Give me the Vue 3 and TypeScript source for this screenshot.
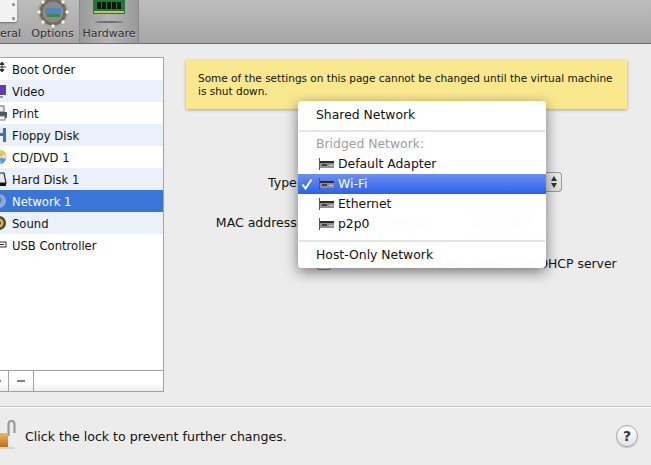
<template>
  <div class="window">
    <header class="toolbar">
      <div class="tool tool-general">
        <div class="general-icon">
          <span class="screw screw-a"></span>
          <span class="screw screw-b"></span>
        </div>
        <span class="tool-label">General</span>
      </div>
      <div class="tool tool-options">
        <svg class="tool-icon" width="34" height="30" viewBox="0 0 34 30">
          <circle cx="17" cy="12" r="14.5" fill="#6f6b62" stroke="#a9a59a" stroke-width="2" />
          <circle cx="17" cy="12" r="10.5" fill="#8d8a83" />
          <rect x="9" y="8" width="16" height="6" fill="#4f86c4" />
          <rect x="11" y="14" width="13" height="3" fill="#3f8a3c" />
          <circle v-for="d in optionDots" :key="d.x + '-' + d.y" :cx="d.x" :cy="d.y" r="1.7" fill="#f7f3dc" />
        </svg>
        <span class="tool-label">Options</span>
      </div>
      <div class="tool tool-hardware">
        <svg class="tool-icon" width="32" height="23" viewBox="0 0 32 23">
          <rect x="0" y="0" width="32" height="14" fill="#1f7a3a" />
          <rect v-for="x in ramChips" :key="x" :x="x" y="2" width="4" height="7" fill="#10130f" />
          <rect x="1" y="11" width="30" height="2" fill="#c9c45a" />
          <ellipse cx="16" cy="22" rx="14" ry="1" fill="#6e6e6e" />
        </svg>
        <span class="tool-label">Hardware</span>
      </div>
    </header>

    <main class="main">
      <aside class="sidebar">
        <ul class="device-list">
          <li
            v-for="(item, i) in devices"
            :key="item.name"
            class="device"
            :class="{ odd: i % 2 === 1, selected: item.name === 'Network 1' }"
          >
            <svg class="device-icon" width="16" height="16" viewBox="0 0 16 16">
              <template v-if="item.icon === 'boot'">
                <path d="M11 1v10M8 6h7M11 1l-2 2.5h4zM11 11l-2-2.5h4z" stroke="#333" fill="#333" />
              </template>
              <template v-else-if="item.icon === 'video'">
                <rect x="2" y="2" width="13" height="10" fill="#555" />
                <rect x="4" y="3.5" width="9" height="7" fill="#6a2ee0" />
                <rect x="6" y="13" width="6" height="2" fill="#999" />
              </template>
              <template v-else-if="item.icon === 'print'">
                <rect x="7" y="1" width="6" height="6" fill="#eee" stroke="#666" />
                <rect x="3" y="7" width="13" height="6" fill="#4b5563" />
                <rect x="6" y="11" width="8" height="4" fill="#f4f4f4" stroke="#777" />
              </template>
              <template v-else-if="item.icon === 'floppy'">
                <rect x="1" y="1" width="14" height="14" fill="#3d6fb8" />
                <rect x="4" y="1" width="8" height="5" fill="#dbe6f4" />
                <rect x="4" y="9" width="8" height="6" fill="#f2f2f2" />
              </template>
              <template v-else-if="item.icon === 'cd'">
                <circle cx="8" cy="8" r="7" fill="#e4e4ea" stroke="#999" stroke-width="0.5" />
                <path d="M8 8L15 5A7 7 0 0 0 10 1z" fill="#e9c53a" />
                <path d="M8 8L10 15A7 7 0 0 0 15 10z" fill="#5aa0e0" />
                <circle cx="8" cy="8" r="2" fill="#fff" stroke="#888" stroke-width="0.5" />
              </template>
              <template v-else-if="item.icon === 'disk'">
                <path d="M5 2h8l2 10H3z" fill="#e8e8e8" stroke="#222" stroke-width="1.2" />
                <rect x="2" y="12" width="13" height="3" fill="#111" />
              </template>
              <template v-else-if="item.icon === 'net'">
                <circle cx="8" cy="8" r="7" fill="#8fa8d4" />
                <path d="M3 6q3-4 6-2t1 5-5 3z" fill="#5c7fba" />
                <circle cx="6" cy="5" r="2" fill="#c9d6ee" />
              </template>
              <template v-else-if="item.icon === 'sound'">
                <circle cx="8" cy="8" r="7" fill="#4a4636" />
                <circle cx="8" cy="8" r="4.6" fill="#d6b945" />
                <circle cx="8" cy="8" r="2" fill="#4a4636" />
              </template>
              <template v-else>
                <rect x="3" y="5" width="12" height="5" fill="#f3f3f3" stroke="#333" />
                <rect x="5" y="7" width="8" height="1" fill="#333" />
              </template>
            </svg>
            <span class="device-name">{{ item.name }}</span>
          </li>
        </ul>
        <div class="list-bar">
          <span class="bar-btn bar-plus"><i class="plus-stub"></i></span>
          <span class="bar-btn"><i class="minus"></i></span>
        </div>
      </aside>

      <section class="panel">
        <div class="notice">
          Some of the settings on this page cannot be changed until the virtual machine is shut down.
        </div>

        <div class="form">
          <label class="check-row connected"><span class="checkbox"></span>Connected</label>
          <div class="form-row type-row">
            <span class="form-label">Type:</span>
            <div class="select-box">
              <span class="stepper">
                <i class="arrow up"></i>
                <i class="arrow down"></i>
              </span>
            </div>
          </div>
          <div class="form-row mac-row">
            <span class="form-label">MAC address:</span>
            <span class="mac-value">00:0C:29:3F:89:48</span>
            <span class="generate">Generate</span>
          </div>
          <label class="check-row send"><span class="checkbox"></span>Send the host's MAC address to DHCP server</label>
        </div>

        <div class="menu">
          <div class="menu-item">Shared Network</div>
          <div class="menu-sep"></div>
          <div class="menu-item menu-heading">Bridged Network:</div>
          <div
            v-for="a in adapters"
            :key="a"
            class="menu-item adapter"
            :class="{ active: a === 'Wi-Fi' }"
          >
            <svg v-if="a === 'Wi-Fi'" class="check" width="12" height="12" viewBox="0 0 12 12">
              <path d="M1.5 6.5L4.5 10.5L10.5 1.5" fill="none" stroke="#fff" stroke-width="2" />
            </svg>
            <svg class="nic" width="15" height="12" viewBox="0 0 15 12">
              <rect x="0" y="0" width="1" height="12" fill="#555" />
              <rect x="1" y="3" width="14" height="2" fill="#2e2e2e" />
              <rect x="1" y="5" width="14" height="5" fill="#8f8f8f" />
              <rect x="3" y="6" width="5" height="2" fill="#444" />
              <rect x="10" y="7" width="4" height="1" fill="#ccc" />
            </svg>
            <span>{{ a }}</span>
          </div>
          <div class="menu-sep sep-low"></div>
          <div class="menu-item">Host-Only Network</div>
        </div>
      </section>
    </main>

    <footer class="footer">
      <svg class="lock" width="16" height="30" viewBox="0 0 16 30">
        <defs>
          <linearGradient id="brass" x1="0" y1="0" x2="0" y2="1">
            <stop offset="0" stop-color="#f0b465" />
            <stop offset="1" stop-color="#bd6d1e" />
          </linearGradient>
        </defs>
        <path d="M8.5 16V5q0-4 3-4t3 4v8" fill="none" stroke="#9a9a9a" stroke-width="2.2" />
        <path d="M0 13h8v14H0z" fill="url(#brass)" />
        <rect x="0" y="27" width="15" height="2" fill="#d4d4d4" />
      </svg>
      <span class="lock-text">Click the lock to prevent further changes.</span>
      <button type="button" class="help">?</button>
    </footer>
  </div>
</template>

<script setup lang="ts">
interface Device {
  name: string
  icon: string
}

const devices: Device[] = [
  { name: 'Boot Order', icon: 'boot' },
  { name: 'Video', icon: 'video' },
  { name: 'Print', icon: 'print' },
  { name: 'Floppy Disk', icon: 'floppy' },
  { name: 'CD/DVD 1', icon: 'cd' },
  { name: 'Hard Disk 1', icon: 'disk' },
  { name: 'Network 1', icon: 'net' },
  { name: 'Sound', icon: 'sound' },
  { name: 'USB Controller', icon: 'usb' },
]

const adapters = ['Default Adapter', 'Wi-Fi', 'Ethernet', 'p2p0']

const ramChips = [4, 9, 14, 19, 24]

const optionDots = [
  { x: 17, y: -2 },
  { x: 7, y: 2 },
  { x: 27, y: 2 },
  { x: 3, y: 12 },
  { x: 31, y: 12 },
  { x: 7, y: 22 },
  { x: 27, y: 22 },
  { x: 17, y: 26 },
]
</script>

<style>
html,
body {
  margin: 0;
  overflow: hidden;
}
</style>

<style scoped>
.window {
  width: 651px;
  height: 465px;
  display: flex;
  flex-direction: column;
  overflow: hidden;
  background: #ececec;
  color: #111;
  font-family: "DejaVu Sans", "Liberation Sans", sans-serif;
  font-size: 12.5px;
}

.toolbar {
  height: 44px;
  flex: none;
  display: flex;
  box-sizing: border-box;
  border-bottom: 1px solid #6f6f6f;
  background: linear-gradient(#bdbdbd, #a6a6a6);
}

.tool {
  position: relative;
  display: flex;
  flex-direction: column;
  align-items: center;
  justify-content: flex-end;
  padding-bottom: 3px;
  box-sizing: border-box;
}

.tool-label {
  position: relative;
  font-size: 11px;
  line-height: 13px;
  color: #2f2f2f;
  text-shadow: 0 1px 0 rgba(255, 255, 255, 0.35);
}

.tool-general {
  width: 56px;
  margin-left: -30px;
  align-items: flex-end;
  padding-right: 5px;
}

.general-icon {
  position: absolute;
  right: 9px;
  top: -3px;
  width: 28px;
  height: 25px;
  background: #f2f2f2;
  border-radius: 2px;
  box-shadow: 0 1px 2px rgba(0, 0, 0, 0.4);
}

.screw {
  position: absolute;
  width: 3px;
  height: 3px;
  border-radius: 50%;
  background: #888;
  right: 2px;
}

.screw-a {
  top: 6px;
}

.screw-b {
  bottom: 2px;
}

.tool-options {
  width: 53px;
}

.tool-hardware {
  width: 60px;
  border-left: 1px solid #8a8a8a;
  border-right: 1px solid #8a8a8a;
  background: linear-gradient(90deg, #9a9a9a, #b4b4b4 50%, #9a9a9a);
}

.tool-icon {
  position: absolute;
  top: 0;
  left: 50%;
  transform: translateX(-50%);
  overflow: visible;
}

.main {
  flex: 1;
  display: flex;
  min-height: 0;
}

.sidebar {
  width: 184px;
  margin: 13px 0 14px -20px;
  flex: none;
  display: flex;
  flex-direction: column;
  box-sizing: border-box;
  border: 1px solid #a3a3a3;
  background: #fff;
}

.device-list {
  flex: 1;
  margin: 0;
  padding: 0;
  list-style: none;
}

.device {
  height: 22px;
  display: flex;
  align-items: center;
  padding-left: 10px;
  gap: 5px;
  font-size: 11.6px;
  line-height: 22px;
  white-space: nowrap;
}

.device.odd {
  background: #ebf1fb;
}

.device.selected {
  background: #3a75d8;
  color: #fff;
}

.device-icon {
  flex: none;
}

.device-name {
  padding-top: 1px;
}

.list-bar {
  height: 21px;
  flex: none;
  display: flex;
  box-sizing: border-box;
  border-top: 1px solid #a3a3a3;
  background: linear-gradient(#fff 60%, #eeeeee);
}

.bar-btn {
  width: 24px;
  display: flex;
  align-items: center;
  justify-content: center;
  border-right: 1px solid #a3a3a3;
}

.bar-plus {
  width: 28px;
  justify-content: flex-start;
  padding-left: 10px;
  box-sizing: border-box;
}

.plus-stub {
  display: block;
  width: 10px;
  height: 2px;
  background: #888;
}

.minus {
  display: block;
  width: 8px;
  height: 2px;
  background: #808080;
}

.panel {
  position: relative;
  flex: 1;
  min-width: 0;
  padding: 16px 24px 0 22px;
}

.notice {
  box-sizing: border-box;
  height: 49px;
  padding: 12px 8px 0 12px;
  font-size: 10.5px;
  line-height: 13px;
  background: #fae88f;
  box-shadow: 0 1px 3px rgba(0, 0, 0, 0.3);
}

.form {
  margin-left: -22px;
  padding-top: 21px;
  display: flex;
  flex-direction: column;
}

.form-row {
  display: flex;
  align-items: center;
}

.form-label {
  width: 137px;
  text-align: right;
  white-space: nowrap;
  flex: none;
}

.check-row {
  display: flex;
  align-items: center;
  gap: 7px;
  margin-left: 153px;
  white-space: nowrap;
  height: 16px;
  font-size: 12.4px;
}

.checkbox {
  width: 14px;
  height: 14px;
  flex: none;
  box-sizing: border-box;
  border: 1px solid #8a8a8a;
  border-radius: 2px;
  background: #f6f6f6;
}

.type-row {
  margin-top: 26px;
  height: 20px;
}

.select-box {
  width: 261px;
  margin-left: 0;
  height: 20px;
  flex: none;
  display: flex;
  justify-content: flex-end;
}

.stepper {
  width: 16px;
  height: 20px;
  box-sizing: border-box;
  border: 1px solid #9a9a9a;
  border-left: none;
  border-radius: 0 4px 4px 0;
  background: linear-gradient(#efefef, #dcdcdc);
  display: flex;
  flex-direction: column;
  align-items: center;
  justify-content: center;
  gap: 2px;
}

.arrow {
  width: 0;
  height: 0;
  border-left: 3px solid transparent;
  border-right: 3px solid transparent;
}

.arrow.up {
  border-bottom: 5px solid #333;
}

.arrow.down {
  border-top: 5px solid #333;
}

.mac-row {
  margin-top: 20px;
  height: 20px;
}

.mac-value {
  margin-left: 12px;
}

.generate {
  margin-left: 30px;
  box-sizing: border-box;
  width: 86px;
  height: 22px;
  line-height: 20px;
  text-align: center;
  border: 1px solid #8f8f8f;
  border-radius: 4px;
}

.send {
  margin-top: 23px;
}

.menu {
  position: absolute;
  left: 134px;
  top: 57px;
  width: 248px;
  box-sizing: border-box;
  padding-top: 4px;
  height: 167px;
  background: rgba(255, 255, 255, 0.985);
  border-radius: 4px;
  box-shadow: 0 4px 14px rgba(0, 0, 0, 0.5);
  font-size: 12.4px;
}

.menu-item {
  height: 20px;
  line-height: 20px;
  padding-left: 18px;
  white-space: nowrap;
}

.menu-sep {
  height: 2px;
  margin: 5px 1px 2px;
  background: #e4e4e4;
}

.sep-low {
  margin: 6px 1px 3px;
}

.menu-heading {
  color: #a0a0a0;
}

.adapter {
  position: relative;
  display: flex;
  align-items: center;
  padding-left: 21px;
  gap: 4px;
}

.adapter.active {
  background: linear-gradient(#6d90f1, #2a62ea);
  color: #fff;
}

.check {
  position: absolute;
  left: 3px;
  top: 4px;
}

.nic {
  flex: none;
}

.footer {
  height: 59px;
  flex: none;
  box-sizing: border-box;
  display: flex;
  align-items: center;
  position: relative;
  border-top: 1px solid #c2c2c2;
  box-shadow: inset 0 1px 0 #fff;
  padding-right: 13px;
}

.lock {
  margin-bottom: 2px;
  flex: none;
}

.lock-text {
  margin-left: 9px;
  padding-top: 1px;
  flex: 1;
  font-size: 12.6px;
}

.help {
  width: 22px;
  height: 22px;
  padding: 0;
  border: 1px solid #a8a8a8;
  border-radius: 50%;
  background: linear-gradient(#fff, #e2e2e2);
  font: bold 14px "DejaVu Sans", sans-serif;
  color: #333;
  box-shadow: 0 1px 1px rgba(0, 0, 0, 0.2);
}
</style>
